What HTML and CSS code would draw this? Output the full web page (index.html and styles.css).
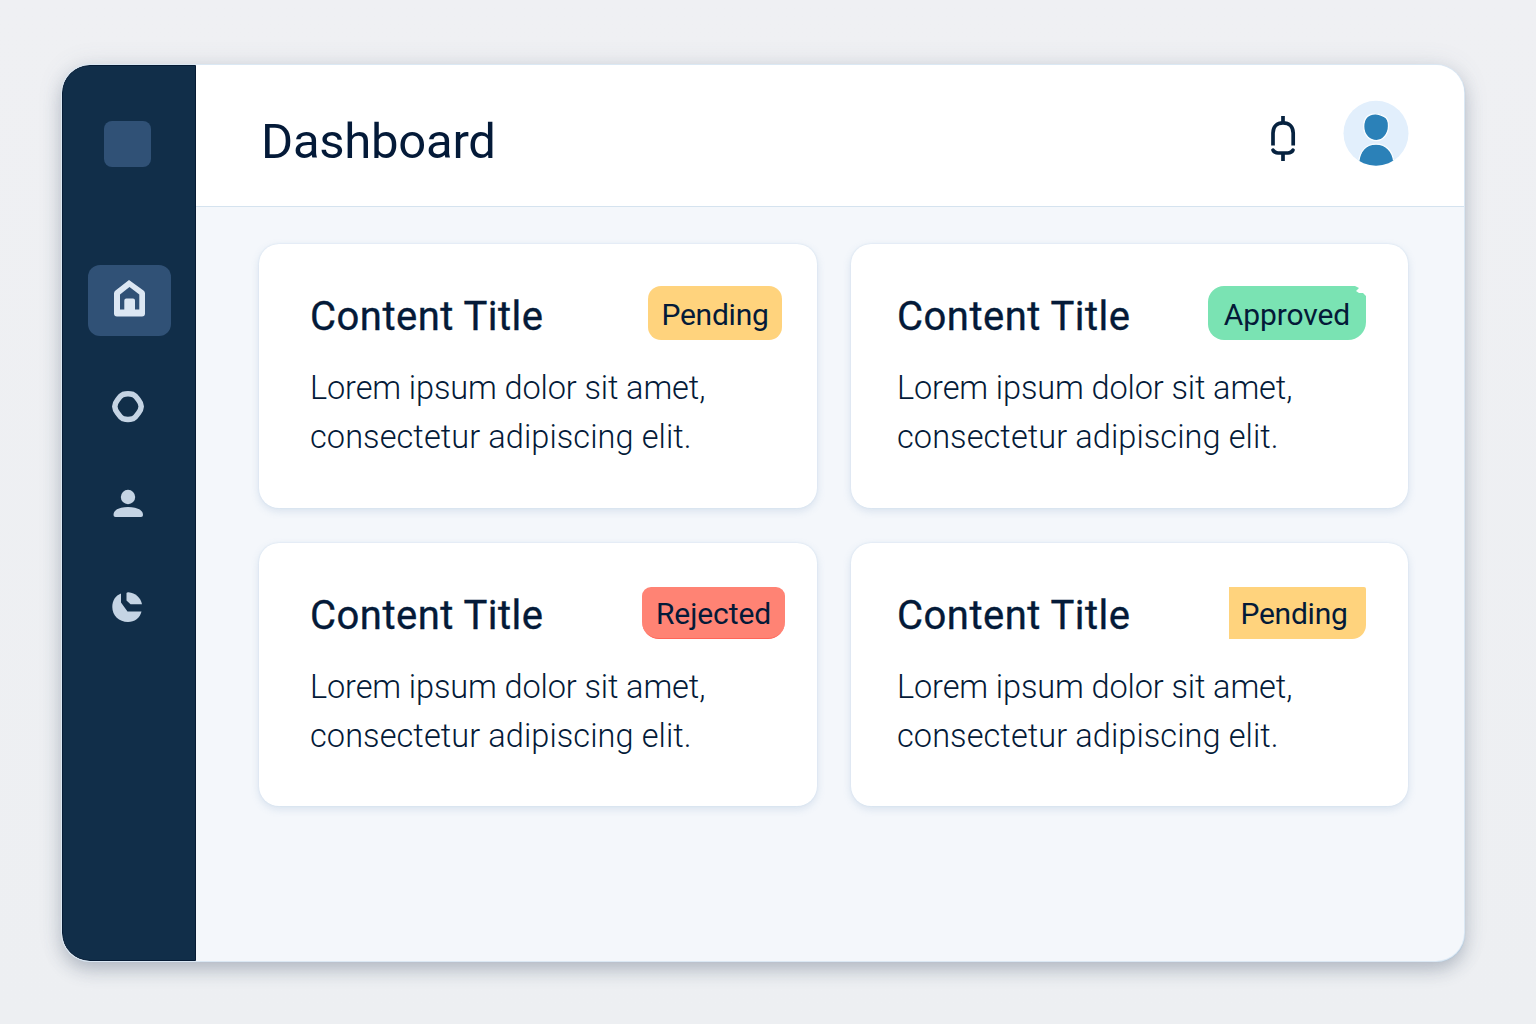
FILE: index.html
```html
<!DOCTYPE html>
<html lang="en">
<head>
<meta charset="utf-8">
<title>Dashboard</title>
<link rel="stylesheet" href="styles.css">
</head>
<body>
<div class="window">
  <nav class="sidebar">
    <div class="logo"></div>
    <a class="nav-item active"><svg width="36" height="42" viewBox="0 0 36 42"><path fill="#dce7f3" fill-rule="evenodd" d="M18 4 32.500 14.500Q34 15.700 34 17.500V37.500Q34 40.500 31 40.500H6Q3 40.500 3 37.500V17.500Q3 15.700 4.500 14.500ZM18.500 11 9 18.500V33.500H13.300V24.500Q13.300 22.500 15.300 22.500H22Q24 22.500 24 24.500V33.500H28.300V18.500Z"/></svg></a>
    <a class="nav-item"><svg width="36" height="36" viewBox="0 0 36 36"><path fill="none" stroke="#c5d4e4" stroke-width="5.500" stroke-linejoin="round" d="M13 5.500Q18 4 23 5.500Q25.500 6.500 28.500 11Q31 14 31.200 17.500Q31 21 28.500 24Q25.500 28.500 23 29.700Q18 31.200 13 29.700Q10.500 28.500 7.500 24Q5 21 4.800 17.500Q5 14 7.500 11Q10.500 6.500 13 5.500Z"/></svg></a>
    <a class="nav-item person"><svg width="36" height="36" viewBox="0 0 36 36"><g fill="#c5d4e4"><circle cx="18" cy="12" r="7.200"/><path d="M3.500 30C3.500 24.500 10 22 18 22S33 24.500 33 30Q33 32 31 32H5.500Q3.500 32 3.500 30Z"/></g></svg></a>
    <a class="nav-item"><svg width="36" height="36" viewBox="0 0 36 36"><g fill="#c5d4e4"><path d="M11 4.500V13.500L17.500 22.500H31.500C30 29 24.500 33 18 33C9 33 2.300 26.500 2.300 18C2.300 11.500 5.500 6.500 11 4.500Z"/><path d="M16.500 4Q17 3.200 18.500 3.300C25.500 4 30.500 8.500 32 15.300H20.500L16.500 11.500Z"/></g></svg></a>
  </nav>
  <main class="main">
    <header class="topbar">
      <h1>Dashboard</h1>
      <div class="tools">
        <svg class="bell" width="28" height="48" viewBox="0 0 28 48"><g fill="none" stroke="#06223f" stroke-width="3.700"><path d="M14 1V8M4 30.500V18C4 11.500 8 7.800 14 7.800S24.200 11.500 24.200 18V30.500M14 38V46"/><path stroke-linecap="round" d="M4 35.200Q5.500 38 9 38H19Q22.500 38 24 35.200"/></g></svg>
        <svg class="avatar" width="66" height="67" viewBox="0 0 66 67"><defs><clipPath id="disc"><circle cx="33" cy="33.300" r="32.500"/></clipPath></defs><circle cx="33" cy="33.300" r="32.500" fill="#e2effc"/><g clip-path="url(#disc)"><g transform="translate(0 .6)" fill="#2b81b8" stroke="#fafdff" stroke-width="1.300"><path d="M32 13.300C36 13 38 14.500 41 15.800C44 17.200 45.700 20.500 45.500 25.500C45.500 34 39.500 40 33.500 40C27 40 20.700 35 20.700 26C20.700 18 25 13.600 32 13.300Z"/><path d="M15.500 69V62C17 50 23.500 43.600 33 43.600S49.500 50 50.800 61V69Z"/></g></g></svg>
      </div>
    </header>
    <section class="cards">
      <article class="card">
        <div class="card-head"><h2>Content Title</h2><span class="badge pending">Pending</span></div>
        <p><span class="lead">Lorem ipsum dolor sit amet,</span><br>consectetur adipiscing elit.</p>
      </article>
      <article class="card right">
        <div class="card-head"><h2>Content Title</h2><span class="badge approved">Approved</span></div>
        <p><span class="lead">Lorem ipsum dolor sit amet,</span><br>consectetur adipiscing elit.</p>
      </article>
      <article class="card">
        <div class="card-head"><h2>Content Title</h2><span class="badge rejected">Rejected</span></div>
        <p><span class="lead">Lorem ipsum dolor sit amet,</span><br>consectetur adipiscing elit.</p>
      </article>
      <article class="card right">
        <div class="card-head"><h2>Content Title</h2><span class="badge pending squared">Pending</span></div>
        <p><span class="lead">Lorem ipsum dolor sit amet,</span><br>consectetur adipiscing elit.</p>
      </article>
    </section>
  </main>
</div>
</body>
</html>
```
FILE: styles.css
```css
* { box-sizing: border-box; }
body {
  margin: 0;
  height: 1024px;
  padding: 65px 72px 63px 62px;
  overflow: hidden;
  background: linear-gradient(#eff0f3, #edeff2);
  font-family: Roboto, sans-serif;
  color: #041a38;
}
h1, h2, p { margin: 0; }
svg { display: block; flex: none; }
.window {
  display: flex;
  width: 1402px;
  height: 896px;
  border-radius: 28px;
  overflow: hidden;
  background: #f4f7fb;
  box-shadow: 0 0 0 1px #dbe8f4, 1px 1px 1px #a9c2d8, 0 9px 18px rgba(70, 85, 110, .3), 0 0 26px rgba(90, 105, 130, .13);
}
.sidebar {
  width: 134px;
  flex: none;
  padding-top: 55px;
  display: flex;
  flex-direction: column;
  align-items: center;
  background: #112e49;
  border: 1px solid #061b34;
  border-radius: 28px 0 0 28px;
}
.logo {
  width: 47px;
  height: 46px;
  margin: 0 3px 98px 0;
  border-radius: 8px;
  background: #305176;
}
.nav-item {
  width: 84px;
  height: 71px;
  margin-bottom: 29px;
  display: flex;
  align-items: center;
  justify-content: center;
  border-radius: 12px;
}
.nav-item:not(.active) { padding-right: 2px; }
.nav-item.active {
  width: 83px;
  margin: 0 0 35px 1px;
  padding: 0 1px 8px 0;
  background: #305176;
}
.nav-item.person { padding-bottom: 7px; }
.main { flex: 1; display: flex; flex-direction: column; }
.topbar {
  height: 142px;
  padding: 0 55px 0 65px;
  display: flex;
  justify-content: space-between;
  background: #fff;
  border-bottom: 1px solid #d5e3ef;
}
h1 {
  padding-top: 47px;
  font-size: 49px;
  line-height: 60px;
  font-weight: 400;
  letter-spacing: -.25px;
}
.tools { display: flex; gap: 46px; padding-top: 35px; }
.bell { margin-top: 15px; }
.cards {
  padding: 37px 56px 0 63px;
  display: grid;
  grid-template-columns: 558px 557px;
  grid-template-rows: 264px 263px;
  gap: 35px 34px;
}
.card {
  padding: 42px 35px 0 51px;
  border-radius: 20px;
  background: #fff;
  box-shadow: 0 0 2px #cfdeee, 0 3px 8px rgba(100, 140, 185, .2);
}
.card.right { padding: 42px 42px 0 46px; }
.card-head { display: flex; justify-content: space-between; height: 54px; }
h2 {
  padding-top: 1px;
  font-size: 40px;
  line-height: 60px;
  font-weight: 400;
  letter-spacing: .48px;
  -webkit-text-stroke: .35px currentColor;
}
.card p {
  margin-top: 24px;
  font-size: 32.5px;
  line-height: 48.5px;
  font-weight: 300;
  letter-spacing: .08px;
  white-space: nowrap;
}
.lead { letter-spacing: -.12px; }
.badge {
  width: 134px;
  height: 54px;
  font-size: 30px;
  line-height: 58px;
  letter-spacing: -.25px;
  text-align: center;
  border-radius: 13px;
}
.pending { background: #ffd37d; }
.approved {
  width: 158px;
  letter-spacing: -.1px;
  border-radius: 16px 8px 18px 16px;
  background: #7ae3b3;
  clip-path: polygon(0 0, 147px 0, 151px 2px, 148px 5px, 151px 7px, 155px 7px, 158px 10px, 158px 54px, 0 54px);
}
.rejected {
  width: 143px;
  height: 52px;
  margin: 2px -3px 0 0;
  line-height: 54px;
  letter-spacing: -.1px;
  border-radius: 9px 9px 17px 17px;
  background: #ff8374;
  border-bottom: 1px solid #ff6558;
}
.squared {
  width: 137px;
  height: 52px;
  margin-top: 2px;
  padding-right: 7px;
  line-height: 54px;
  border-radius: 0 2px 14px 0;
}
```
